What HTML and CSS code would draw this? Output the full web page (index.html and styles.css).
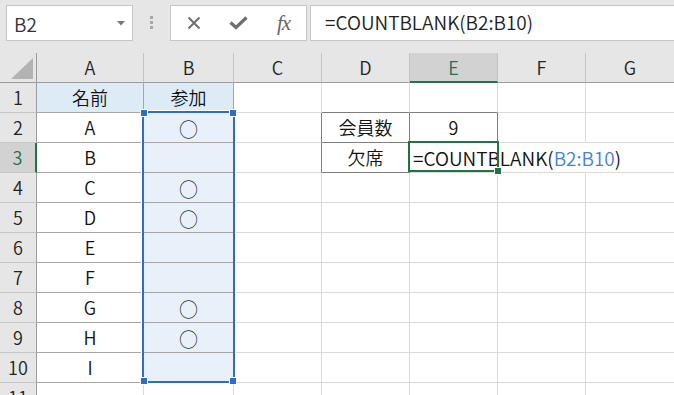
FILE: index.html
```html
<!DOCTYPE html>
<html lang="ja">
<head>
<meta charset="utf-8">
<title>COUNTBLANK</title>
<link rel="stylesheet" href="styles.css">
</head>
<body>
<div class="app">
  <div class="toolbar">
    <div class="namebox">
      <span class="name">B2</span>
      <svg class="caret" width="8" height="5" viewBox="0 0 8 5"><path d="M0 0H8L4 4.5Z" fill="#777"/></svg>
    </div>
    <div class="grip"><i></i><i></i><i></i></div>
    <div class="fbtns">
      <span class="fb"><svg width="14" height="14" viewBox="0 0 14 14"><path d="M1.5 1.5L12.5 12.5M12.5 1.5L1.5 12.5" stroke="#6f6f6f" stroke-width="2" fill="none"/></svg></span>
      <span class="fb"><svg width="19" height="14" viewBox="0 0 19 14"><path d="M1.5 6.5L7 11.5L17.5 1.5" stroke="#6f6f6f" stroke-width="3.2" fill="none"/></svg></span>
      <span class="fb fx">fx</span>
    </div>
    <div class="finput">=COUNTBLANK(B2:B10)</div>
  </div>

  <div class="sheet">
    <div class="corner"><svg width="22" height="21" viewBox="0 0 22 21"><path d="M22 0V21H0Z" fill="#b3b3b3"/></svg></div>
    <div class="h">A</div><div class="h">B</div><div class="h">C</div><div class="h">D</div><div class="h hl hb">E</div><div class="h">F</div><div class="h">G</div>

    <div class="r">1</div><div class="c t k">名前</div><div class="c t k">参加</div><div class="c"></div><div class="c bb"></div><div class="c bb"></div><div class="c"></div><div class="c"></div>

    <div class="r">2</div><div class="c t">A</div><div class="c t s"><span class="o">○</span></div><div class="c br"></div><div class="c x">会員数</div><div class="c x">9</div><div class="c"></div><div class="c"></div>

    <div class="r hl hr">3</div><div class="c t">B</div><div class="c t s"></div><div class="c br"></div><div class="c x">欠席</div><div class="c wide">=COUNTBLANK(<span class="ref">B2:B10</span>)</div>

    <div class="r">4</div><div class="c t">C</div><div class="c t s"><span class="o">○</span></div><div class="c"></div><div class="c"></div><div class="c"></div><div class="c"></div><div class="c"></div>

    <div class="r">5</div><div class="c t">D</div><div class="c t s"><span class="o">○</span></div><div class="c"></div><div class="c"></div><div class="c"></div><div class="c"></div><div class="c"></div>

    <div class="r">6</div><div class="c t">E</div><div class="c t s"></div><div class="c"></div><div class="c"></div><div class="c"></div><div class="c"></div><div class="c"></div>

    <div class="r">7</div><div class="c t">F</div><div class="c t s"></div><div class="c"></div><div class="c"></div><div class="c"></div><div class="c"></div><div class="c"></div>

    <div class="r">8</div><div class="c t">G</div><div class="c t s"><span class="o">○</span></div><div class="c"></div><div class="c"></div><div class="c"></div><div class="c"></div><div class="c"></div>

    <div class="r">9</div><div class="c t">H</div><div class="c t s"><span class="o">○</span></div><div class="c"></div><div class="c"></div><div class="c"></div><div class="c"></div><div class="c"></div>

    <div class="r">10</div><div class="c t">I</div><div class="c t s"></div><div class="c"></div><div class="c"></div><div class="c"></div><div class="c"></div><div class="c"></div>

    <div class="r">11</div><div class="c"></div><div class="c"></div><div class="c"></div><div class="c"></div><div class="c"></div><div class="c"></div><div class="c"></div>

    <div class="range"><i class="q q1"></i><i class="q q2"></i><i class="q q3"></i><i class="q q4"></i></div>
    <div class="active"><i class="handle"></i></div>
  </div>
</div>
</body>
</html>
```

FILE: styles.css
```css
* { box-sizing: border-box; }
html, body { margin: 0; padding: 0; }
body {
  background: #e6e6e6;
  font-family: "Noto Sans CJK JP", "Noto Sans", sans-serif;
  font-weight: 350;
  color: #111;
  overflow: hidden;
}
.app { width: 674px; height: 395px; overflow: hidden; }

.toolbar {
  height: 53px;
  display: flex;
  align-items: flex-start;
  padding: 5px 0 0 6px;
}
.namebox {
  width: 127px;
  height: 36px;
  background: #fff;
  border: 1px solid #c6c6c6;
  display: flex;
  align-items: center;
  justify-content: space-between;
  padding: 0 7px 0 7px;
  font-size: 19px;
  color: #333;
}
.caret { margin-top: 1px; }
.grip {
  width: 37px;
  display: flex;
  flex-direction: column;
  align-items: center;
  gap: 2px;
  padding-top: 11px;
}
.grip i { display: block; width: 3px; height: 3px; background: #a8a8a8; }
.fbtns {
  width: 137px;
  height: 36px;
  background: #fff;
  border: 1px solid #c6c6c6;
  display: flex;
  align-items: center;
}
.fb {
  width: 45px;
  height: 34px;
  display: flex;
  align-items: center;
  justify-content: center;
}
.fx {
  font-family: "Liberation Serif", serif;
  font-style: italic;
  font-weight: 400;
  font-size: 21px;
  color: #666;
  letter-spacing: -1px;
}
.finput {
  flex: 1;
  margin-left: 3px;
  height: 36px;
  background: #fff;
  border: 1px solid #c6c6c6;
  border-right: none;
  padding-left: 14px;
  font-size: 19px;
  line-height: 32px;
  color: #222;
  white-space: nowrap;
}

.sheet {
  position: relative;
  display: grid;
  grid-template-columns: 37px 107px 90px 88px 88px 88px 88px 89px;
  grid-template-rows: repeat(12, 30px);
  font-size: 18px;
}
.sheet > div {
  display: flex;
  align-items: center;
  justify-content: center;
  line-height: 1;
  padding-bottom: 1px;
  white-space: nowrap;
}
.corner {
  background: #e6e6e6;
  border-right: 1px solid #9b9b9b;
  border-bottom: 1px solid #9b9b9b;
  justify-content: flex-end !important;
  align-items: flex-end !important;
  padding: 0 3px 3px 0 !important;
}
.h {
  background: #e6e6e6;
  border-right: 1px solid #c3c3c3;
  border-bottom: 1px solid #9b9b9b;
  color: #222;
}
.r {
  background: #e6e6e6;
  border-right: 1px solid #9b9b9b;
  border-bottom: 1px solid #c6c6c6;
  color: #222;
}
.hl { background: #d2d2d2 !important; color: #217346 !important; }
.hb { border-bottom: 2px solid #217346 !important; }
.hr { border-right: 2px solid #217346 !important; }

.c {
  background: #fff;
  border-right: 1px solid #dadada;
  border-bottom: 1px solid #dadada;
}
.t { border-right-color: #a6a6a6; border-bottom-color: #a6a6a6; }
.k { background: #ddebf7; }
.s { background: #e8f0fa; }
.x { border-right-color: #7f7f7f; border-bottom-color: #7f7f7f; }
.br { border-right-color: #7f7f7f; }
.bb { border-bottom-color: #7f7f7f; }
.o { font-size: 19px; color: #333; margin-top: 2px; }
.wide {
  grid-column: span 3;
  justify-content: flex-start !important;
  padding-left: 3px;
  font-size: 19px;
}
.ref { color: #4a80d6; }

.range {
  position: absolute;
  left: 142px;
  top: 58px;
  width: 93px;
  height: 272px;
  border: 2px solid #2f6cc7;
  outline: 1px solid #fff;
}
.q {
  position: absolute;
  width: 6px;
  height: 6px;
  background: #2f6cc7;
  outline: 1px solid #fff;
}
.q1 { left: -3px; top: -3px; }
.q2 { right: -3px; top: -3px; }
.q3 { left: -3px; bottom: -3px; }
.q4 { right: -3px; bottom: -3px; }

.active {
  position: absolute;
  left: 408px;
  top: 88px;
  width: 91px;
  height: 31px;
  border: 2px solid #217346;
}
.handle {
  position: absolute;
  right: -4px;
  bottom: -4px;
  width: 6px;
  height: 6px;
  background: #217346;
  outline: 1px solid #fff;
}
```
